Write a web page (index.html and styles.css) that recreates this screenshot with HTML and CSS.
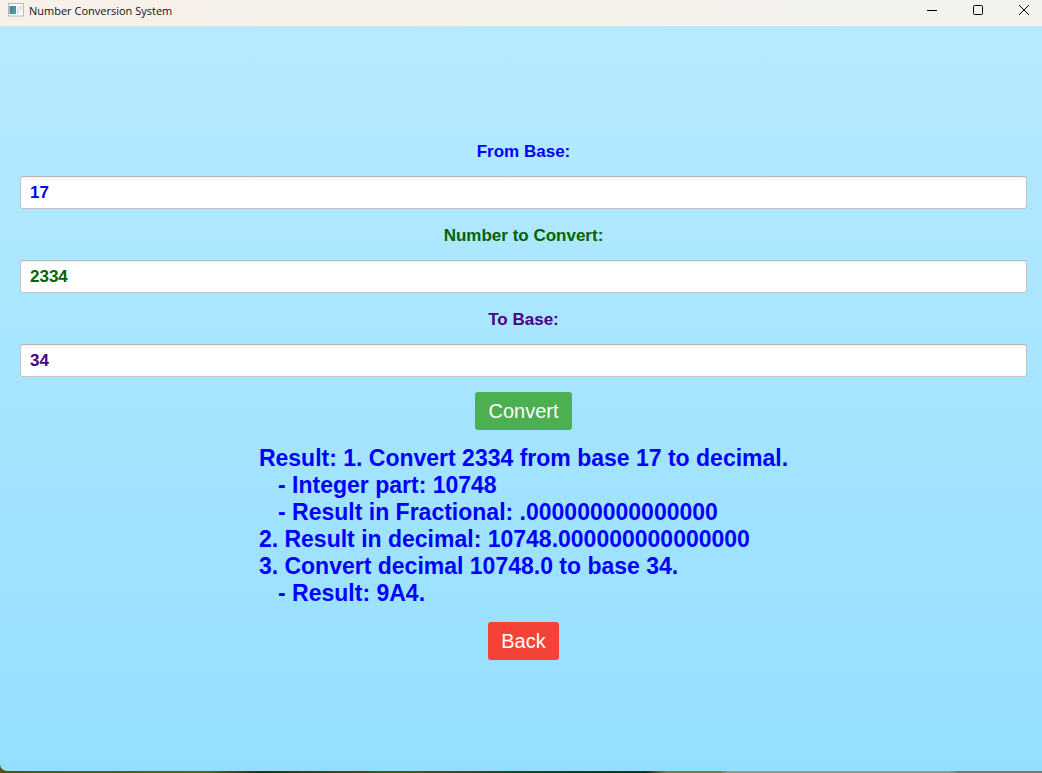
FILE: index.html
```html
<!DOCTYPE html>
<html lang="en">
<head>
<meta charset="utf-8">
<title>Number Conversion System</title>
<link rel="stylesheet" href="styles.css">
</head>
<body>
<div class="window">
  <header class="titlebar">
    <svg class="app-icon" width="16" height="14" viewBox="0 0 16 14" aria-hidden="true">
      <defs>
        <linearGradient id="pane" x1="0" y1="0" x2="1" y2="1">
          <stop offset="0" stop-color="#4777b5"/>
          <stop offset="1" stop-color="#4fae72"/>
        </linearGradient>
      </defs>
      <rect x="0.5" y="0.5" width="15" height="12.5" fill="#fafbfc" stroke="#b4b9c4"/>
      <rect x="1.5" y="3" width="6.5" height="8" fill="url(#pane)"/>
      <rect x="9" y="3" width="2.5" height="8" fill="#dbe8ee"/>
      <rect x="12" y="3" width="2" height="4" fill="#d5e6d8"/>
    </svg>
    <h1 class="title">Number Conversion System</h1>
    <div class="controls">
      <button class="control" type="button" aria-label="Minimize"><svg width="12" height="12" viewBox="0 0 12 12"><path d="M1 6.5h10" fill="none" stroke="#000"/></svg></button>
      <button class="control" type="button" aria-label="Maximize"><svg width="12" height="12" viewBox="0 0 12 12"><rect x="1.5" y="1.5" width="9" height="9" rx="1" fill="none" stroke="#000"/></svg></button>
      <button class="control close" type="button" aria-label="Close"><svg width="12" height="12" viewBox="0 0 12 12"><path d="M1 1l10 10M11 1L1 11" fill="none" stroke="#000"/></svg></button>
    </div>
  </header>
  <main class="content">
    <form class="form">
      <label class="label from" for="from-base">From Base:</label>
      <input class="field from" id="from-base" type="text" value="17">
      <label class="label number" for="number">Number to Convert:</label>
      <input class="field number" id="number" type="text" value="2334">
      <label class="label to" for="to-base">To Base:</label>
      <input class="field to" id="to-base" type="text" value="34">
      <button class="button convert" type="button">Convert</button>
      <output class="result" for="from-base number to-base">Result: 1. Convert 2334 from base 17 to decimal.
   - Integer part: 10748
   - Result in Fractional: .000000000000000
2. Result in decimal: 10748.000000000000000
3. Convert decimal 10748.0 to base 34.
   - Result: 9A4.</output>
      <button class="button back" type="button">Back</button>
    </form>
  </main>
</div>
</body>
</html>
```

FILE: styles.css
```css
* {
  box-sizing: border-box;
}

body {
  margin: 0;
  min-height: 100vh;
  display: flex;
  flex-direction: column;
  padding-bottom: 2px;
  background: linear-gradient(90deg, #4f5a08 0%, #59620c 20%, #173f0b 25%, #4d5c0a 38%, #1a4a18 50%, #0b3a18 62%, #8a7433 64%, #8a7433 69%, #999 70%, #999 91%, #737b80 92%);
  font-family: "Liberation Sans", Arial, sans-serif;
}

.window {
  flex: 1;
  display: flex;
  flex-direction: column;
  overflow: hidden;
  border-bottom-left-radius: 7px;
}

.titlebar {
  display: flex;
  align-items: flex-start;
  height: 26px;
  padding-left: 8px;
  background: linear-gradient(90deg, #f8f1ea, #f3f2ed);
}

.app-icon {
  margin-top: 3px;
}

.title {
  margin: 0 auto 0 5px;
  font: 400 11px/22px "Open Sans", "Noto Sans", sans-serif;
  color: #111;
}

.controls {
  display: flex;
}

.control {
  display: flex;
  align-items: center;
  justify-content: center;
  width: 46px;
  height: 20px;
  padding: 0;
  border: 0;
  background: none;
}

.close {
  width: 36px;
  margin-left: 5px;
}

.content {
  flex: 1;
  display: flex;
  flex-direction: column;
  justify-content: center;
  padding: 2px 15px 0 20px;
  background: linear-gradient(#b8eaff, #94dfff);
}

.form {
  display: flex;
  flex-direction: column;
  align-items: center;
  gap: 15px;
}

.label,
.field {
  font-family: inherit;
  font-size: 17px;
  font-weight: 700;
}

.label {
  padding-top: 2px;
  line-height: 19px;
}

.field {
  width: 100%;
  height: 33px;
  padding: 2px 9px 0;
  border: 1px solid #c3c3c3;
  border-top-color: #b5b5b5;
  border-radius: 3px;
  background: linear-gradient(#f2f2f2, #fff 4px);
}

.from {
  color: #00f;
}

.number {
  color: #006400;
}

.to {
  color: #4b0082;
}

.button {
  height: 38px;
  padding: 1px 13px 0;
  border: 0;
  border-radius: 3px;
  font-family: inherit;
  font-size: 20px;
  color: #fff;
}

.convert {
  background: #4caf50;
}

.back {
  background: #f44336;
}

.result {
  white-space: pre-wrap;
  font-size: 23px;
  font-weight: 700;
  line-height: 27px;
  color: #00f;
}
```
